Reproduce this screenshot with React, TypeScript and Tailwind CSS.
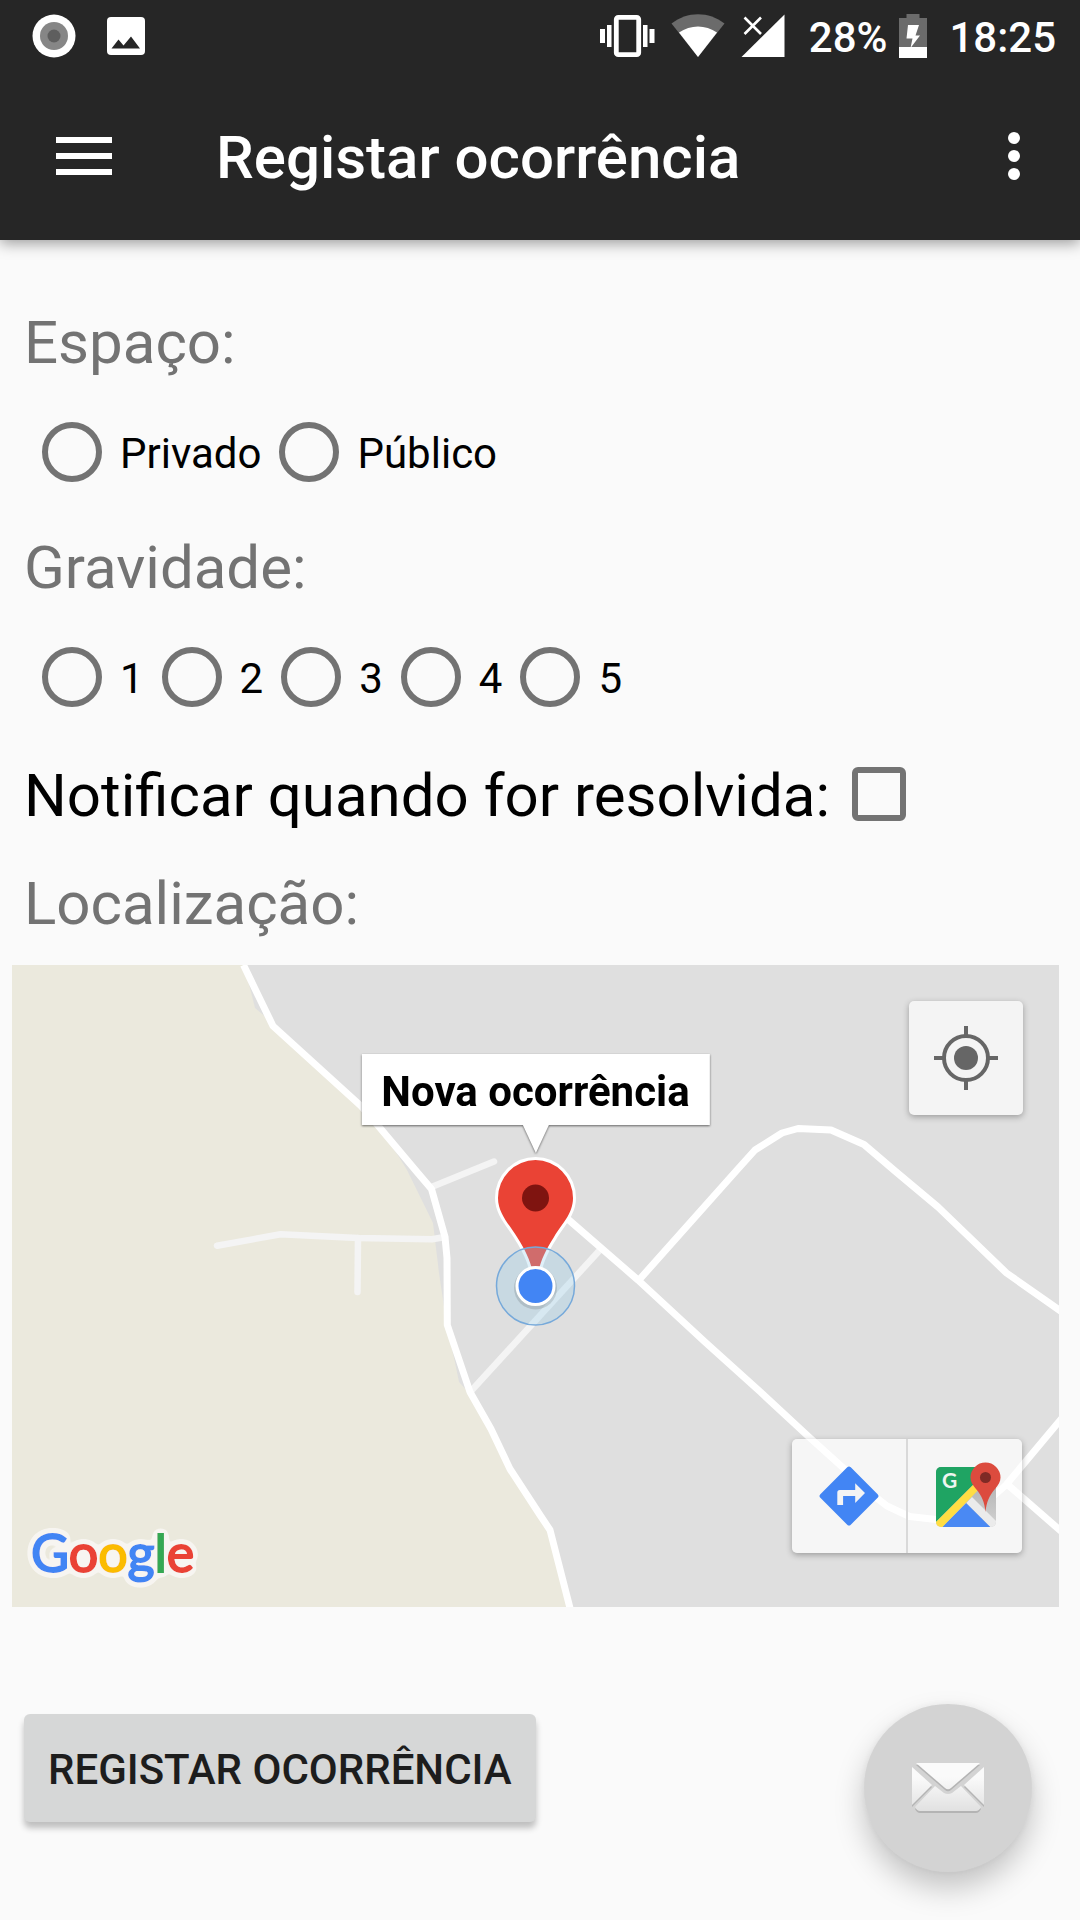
import React from "react";

function StatusBar() {
  return (
    <div className="flex h-[72px] items-center justify-between pl-8 pr-6">
      <div className="flex items-center gap-[30px]">
        <svg width="44" height="44" viewBox="0 0 44 44" aria-hidden="true">
          <circle cx="22" cy="22" r="21.500" fill="#fff" />
          <circle cx="22" cy="22" r="14" fill="#868686" />
          <circle cx="22" cy="22" r="6.500" fill="#5e5e5e" />
        </svg>
        <svg width="40" height="40" viewBox="0 0 40 40" aria-hidden="true">
          <rect x="1" y="1" width="38" height="38" rx="4" fill="#fff" />
          <path d="M5.500 32.500 L12.500 23.500 L17.500 29.500 L25 20.500 L34 32.500 Z" fill="#262626" />
        </svg>
      </div>
      <div className="flex items-center">
        <svg className="mr-4" width="56" height="44" viewBox="0 0 56 44" fill="#fff" aria-hidden="true">
          <rect x="17.300" y="3.300" width="22.400" height="37.400" rx="2" fill="none" stroke="#fff" strokeWidth="4.800" />
          <rect x="1" y="15" width="5" height="14" />
          <rect x="8" y="11" width="4.500" height="22" />
          <rect x="44" y="11" width="4.500" height="22" />
          <rect x="50.500" y="15" width="5" height="14" />
        </svg>
        <svg className="mr-4" width="54" height="44" viewBox="0 0 54 44" aria-hidden="true">
          <path d="M27 43 L0.500 9.500 C16 -3 38 -3 53.500 9.500 Z" fill="#6b6b6b" />
          <path d="M27 43 L8 18.500 C19.500 10.500 34.500 10.500 46 18.500 Z" fill="#fff" />
        </svg>
        <svg className="mr-6" width="44" height="44" viewBox="0 0 44 44" aria-hidden="true">
          <path d="M43.500 0.500 V43 H0.500 Z" fill="#fff" />
          <path d="M3.500 3.500 L20 20 M20 3.500 L3.500 20" stroke="#262626" strokeWidth="6" />
          <path d="M3.500 3.500 L20 20 M20 3.500 L3.500 20" stroke="#fff" strokeWidth="2.600" />
        </svg>
        <span className="pt-1 text-[42px] font-medium leading-[50px]">28%</span>
        <svg className="ml-3 mr-[22px]" width="28" height="44" viewBox="0 0 28 44" aria-hidden="true">
          <path d="M7.500 0 H20.500 V4 H28 V44 H0 V4 H7.500 Z" fill="#6b6b6b" />
          <rect y="33" width="28" height="11" fill="#fff" />
          <path d="M9 11 H20 L16.500 21.500 H21 L11.500 34 L13.500 24.500 H7.500 Z" fill="#fff" />
        </svg>
        <span className="pt-1 text-[42px] font-medium leading-[50px]">18:25</span>
      </div>
    </div>
  );
}

function Header() {
  return (
    <header className="bg-[#262626] text-white shadow-[0_3px_14px_rgba(0,0,0,0.4)]">
      <StatusBar />
      <div className="flex h-[168px] items-center">
        <button type="button" aria-label="Menu" className="flex h-[168px] w-[168px] items-center justify-center">
          <svg width="56" height="38" viewBox="0 0 56 38" fill="#fff" aria-hidden="true">
            <rect width="56" height="6" />
            <rect y="16" width="56" height="6" />
            <rect y="32" width="56" height="6" />
          </svg>
        </button>
        <h1 className="flex-1 pl-12 pt-1 text-[60px] font-medium leading-[70px]">Registar ocorrência</h1>
        <button type="button" aria-label="Mais opções" className="flex h-[168px] w-[132px] items-center justify-center">
          <svg width="12" height="48" viewBox="0 0 12 48" fill="#fff" aria-hidden="true">
            <circle cx="6" cy="6" r="6" />
            <circle cx="6" cy="24" r="6" />
            <circle cx="6" cy="42" r="6" />
          </svg>
        </button>
      </div>
    </header>
  );
}

function RadioRow({ name, label, options }: { name: string; label: string; options: string[] }) {
  return (
    <div role="radiogroup" aria-label={label} className="mt-[29px] flex h-[90px] items-center pl-6">
      {options.map((option) => (
        <label key={option} className="flex items-center">
          <input
            type="radio"
            name={name}
            value={option}
            className="mx-[18px] h-[60px] w-[60px] appearance-none rounded-full border-[6px] border-[#737373] checked:bg-[#737373] checked:bg-clip-content checked:p-2"
          />
          <span className="pt-1 text-[42px] leading-[50px]">{option}</span>
        </label>
      ))}
    </div>
  );
}

const ROAD =
  "M231.500 0 L261 61 L349 141 L363 157 L405 207 L419.500 224 L433 272 L435 293 L435.300 360 L458 427 L479 464 L498 504 L528 550 L538 565 L558.500 645";

function MapCanvas() {
  return (
    <svg
      className="h-full w-full"
      viewBox="0 0 1047 642"
      preserveAspectRatio="xMidYMid slice"
      role="img"
      aria-label="Mapa"
    >
      <rect width="1047" height="642" fill="#dfdfdf" />
      <path
        d="M0 0 H231 L237 19 L243 43 L252.500 51 L261 61 L317 109 L349 141 L366 162 L387 192 L395 205 L421 258 L427 308 L431.500 338 L435.500 365 L442.500 395 L447 417 L458 429 L479 464 L498 504 L528 550 L538 565 L558 642 H0 Z"
        fill="#ebe9dd"
      />
      <g fill="none" stroke="#f4f4f4" strokeWidth="6.500" strokeLinecap="round" strokeLinejoin="round">
        <path d="M205 280.700 L268.500 269.300 L346 273 L420 274.300 L433 272" />
        <path d="M346 273 L345.500 327" />
        <path d="M419.500 222 L482 196.500" />
        <path d="M460 425 L587 286" />
      </g>
      <g fill="none" stroke="#fff" strokeWidth="7" strokeLinejoin="round">
        <path d={ROAD} />
        <path d="M535 236 L626 315 L693 377 L748.500 427 L797 472 L863.500 532 L875 541 L897.500 551.500 L924 554.500 L960 550 L994 520 L1050 453" />
        <path d="M996 520 L1050 567" />
        <path d="M627 315 L725 205 L743 185 L770 168 L786 163.500 L819 165 L852 179.500 L883 206 L926 242 L994.500 308 L1050 347" />
      </g>
      <path
        d="M523.500 320 C520 300 516 289 505 272 C498 260 486 249 486 233 A37.500 38 0 0 1 561 233 C561 249 549 260 542 272 C531 289 527 300 523.500 320 Z"
        fill="#ea4335"
        stroke="#fff"
        strokeWidth="6"
        style={{ paintOrder: "stroke" }}
      />
      <circle cx="523.500" cy="233" r="13.500" fill="#7f1410" />
      <circle cx="523.500" cy="321" r="39" fill="rgba(150,205,235,0.3)" stroke="#76a9da" strokeWidth="1.500" />
      <circle cx="523.500" cy="323" r="21.500" fill="rgba(0,0,0,0.12)" />
      <circle cx="523.500" cy="321" r="18.500" fill="#4285f4" stroke="#fff" strokeWidth="3" />
    </svg>
  );
}

function GoogleLogo() {
  return (
    <svg
      className="absolute bottom-0 left-0 h-[120px] w-[220px]"
      viewBox="0 0 220 120"
      role="img"
      aria-label="Google"
    >
      <defs>
        <filter id="halo" x="-10%" y="-20%" width="120%" height="140%">
          <feGaussianBlur in="SourceAlpha" stdDeviation="3.500" result="soft" />
          <feComponentTransfer in="soft" result="grown">
            <feFuncA type="linear" slope="30" intercept="-1.500" />
          </feComponentTransfer>
          <feFlood floodColor="#f7f5f1" />
          <feComposite in2="grown" operator="in" result="edge" />
          <feMerge>
            <feMergeNode in="edge" />
            <feMergeNode in="SourceGraphic" />
          </feMerge>
        </filter>
      </defs>
      <text
        x="19"
        y="85"
        fontFamily="Lato, 'Liberation Sans', sans-serif"
        fontSize="52"
        fontWeight="400"
        strokeWidth="2"
        filter="url(#halo)"
      >
        <tspan fill="#4285f4" stroke="#4285f4">G</tspan>
        <tspan fill="#ea4335" stroke="#ea4335">o</tspan>
        <tspan fill="#fbbc05" stroke="#fbbc05">o</tspan>
        <tspan fill="#4285f4" stroke="#4285f4">g</tspan>
        <tspan fill="#34a853" stroke="#34a853">l</tspan>
        <tspan fill="#ea4335" stroke="#ea4335">e</tspan>
      </text>
    </svg>
  );
}

function DirectionsIcon() {
  return (
    <svg width="60" height="60" viewBox="-30 -30 60 60" aria-hidden="true">
      <rect x="-21.500" y="-21.500" width="43" height="43" rx="2.500" transform="rotate(45)" fill="#4285f4" />
      <path d="M-11.700 9 V-3.500 Q-11.700 -6 -9.200 -6 H6.200 V-12.700 L16 -3 L6.200 7 V0 H-5.900 V9 Z" fill="#f4f4f4" />
    </svg>
  );
}

function MapsIcon() {
  return (
    <svg width="72" height="72" viewBox="0 0 72 72" aria-hidden="true">
      <defs>
        <clipPath id="tile">
          <rect x="7" y="7" width="60" height="60" rx="5" />
        </clipPath>
        <linearGradient id="fold" x1="0" y1="0" x2="0" y2="1">
          <stop offset="0" stopColor="#a8a8a8" />
          <stop offset="1" stopColor="#d2d2d2" />
        </linearGradient>
      </defs>
      <g clipPath="url(#tile)">
        <rect x="7" y="7" width="60" height="60" fill="url(#fold)" />
        <path d="M7 7 H62 L7 62 Z" fill="#1fa463" />
        <path d="M37.300 43 L12 68 H62.500 Z" fill="#4a89f3" />
        <path d="M37.300 43 L43 37 L68 62 V68 H62.500 Z" fill="#ebebeb" />
        <path d="M6 63 L50 19 L56 23 L12 68.500 H6 Z" fill="#ffdd43" />
      </g>
      <text x="20.500" y="28" textAnchor="middle" fontFamily="Lato, sans-serif" fontSize="21" fontWeight="700" fill="#eef5f0">
        G
      </text>
      <path
        d="M56.500 52 C55.500 42 53 36 47 29 C43.500 25 41.500 21.500 41.500 17.500 A15 15 0 0 1 71.500 17.500 C71.500 21.500 69.500 25 66 29 C60 36 57.500 42 56.500 52 Z"
        fill="#dc4b3e"
      />
      <circle cx="56.500" cy="17.500" r="5.500" fill="#7f2a25" />
    </svg>
  );
}

function LocationMap() {
  return (
    <section aria-label="Localização" className="relative ml-3 mr-[21px] mt-[26px] h-[642px] overflow-hidden">
      <MapCanvas />
      <div className="absolute left-1/2 top-[89px] flex -translate-x-1/2 flex-col items-center drop-shadow-[0_1px_1px_rgba(0,0,0,0.55)]">
        <div className="h-[71px] whitespace-nowrap bg-white px-5 pt-[13px] text-[42px] font-bold leading-[50px] text-black">
          Nova ocorrência
        </div>
        <svg width="28" height="28" viewBox="0 0 28 28" aria-hidden="true">
          <path d="M0.500 -1 H27.500 L14 28 Z" fill="#fff" />
        </svg>
      </div>
      <button
        type="button"
        aria-label="A minha localização"
        className="absolute right-9 top-9 flex h-[114px] w-[114px] items-center justify-center rounded-[5px] bg-[#f4f4f4] shadow-[0_2px_6px_rgba(0,0,0,0.3)]"
      >
        <svg width="64" height="64" viewBox="0 0 64 64" aria-hidden="true">
          <circle cx="32" cy="32" r="22" fill="none" stroke="#666" strokeWidth="4" />
          <circle cx="32" cy="32" r="12" fill="#666" />
          <path d="M32 0 V9 M32 55 V64 M0 32 H9 M55 32 H64" stroke="#666" strokeWidth="4" />
        </svg>
      </button>
      <div className="absolute bottom-[54px] right-[37px] flex h-[114px] divide-x-2 divide-[#d9d9d9] overflow-hidden rounded-[5px] bg-white/70 shadow-[0_2px_6px_rgba(0,0,0,0.3)]">
        <button type="button" aria-label="Direções" className="flex w-[116px] items-center justify-center">
          <DirectionsIcon />
        </button>
        <button type="button" aria-label="Abrir no Google Maps" className="flex w-[114px] items-center justify-center">
          <MapsIcon />
        </button>
      </div>
      <GoogleLogo />
    </section>
  );
}

function MailButton() {
  return (
    <button
      type="button"
      aria-label="Enviar mensagem"
      className="fixed bottom-12 right-12 flex h-[168px] w-[168px] items-center justify-center rounded-full bg-[#d3d3d3] shadow-[0_16px_30px_rgba(0,0,0,0.22),0_0_8px_rgba(0,0,0,0.06)]"
    >
      <svg width="72" height="54" viewBox="0 0 72 54" aria-hidden="true">
        <defs>
          <linearGradient id="paper" x1="0" y1="0" x2="0" y2="54" gradientUnits="userSpaceOnUse">
            <stop offset="0.300" stopColor="#fafafa" />
            <stop offset="1" stopColor="#dedede" />
          </linearGradient>
        </defs>
        <g fill="#b4b4b4" transform="translate(0 2)">
          <path d="M4 2 H68 L39 27 Q36 29.500 33 27 Z" />
          <path d="M0 6 L20 24 L0 44 Z" />
          <path d="M72 6 L52 24 L72 44 Z" />
          <path d="M23 25 L32 32 Q36 34 40 32 L49 25 L69 46 Q67 50 64 50 H8 Q5 50 3 46 Z" />
        </g>
        <g fill="url(#paper)">
          <path d="M4 2 H68 L39 27 Q36 29.500 33 27 Z" />
          <path d="M0 6 L20 24 L0 44 Z" />
          <path d="M72 6 L52 24 L72 44 Z" />
          <path d="M23 25 L32 32 Q36 34 40 32 L49 25 L69 46 Q67 50 64 50 H8 Q5 50 3 46 Z" />
        </g>
      </svg>
    </button>
  );
}

export default function App() {
  return (
    <div className="min-h-screen bg-[#fafafa] font-['Roboto','Noto_Sans',sans-serif] text-black">
      <Header />
      <main className="pt-[68px]">
        <h2 className="pl-6 text-[60px] leading-[70px] text-[#737373]">Espaço:</h2>
        <RadioRow name="espaco" label="Espaço" options={["Privado", "Público"]} />
        <h2 className="mt-9 pl-6 text-[60px] leading-[70px] text-[#737373]">Gravidade:</h2>
        <RadioRow name="gravidade" label="Gravidade" options={["1", "2", "3", "4", "5"]} />
        <label className="mt-[39px] flex items-center pl-6 text-[60px] leading-[70px]">
          Notificar quando for resolvida:
          <input
            type="checkbox"
            className="mb-1 ml-[22px] h-[54px] w-[54px] appearance-none rounded-md border-[6px] border-[#737373] checked:bg-[#737373]"
          />
        </label>
        <h2 className="mt-[38px] pl-6 text-[60px] leading-[70px] text-[#737373]">Localização:</h2>
        <LocationMap />
        <div className="pb-12 pl-6 pt-[107px]">
          <button
            type="button"
            className="h-[108px] rounded-md bg-[#d6d7d7] px-6 pt-1 text-[42px] font-medium uppercase leading-[50px] text-[#1d1d1d] shadow-[0_6px_6px_rgba(0,0,0,0.24)]"
          >
            Registar ocorrência
          </button>
        </div>
      </main>
      <MailButton />
    </div>
  );
}
